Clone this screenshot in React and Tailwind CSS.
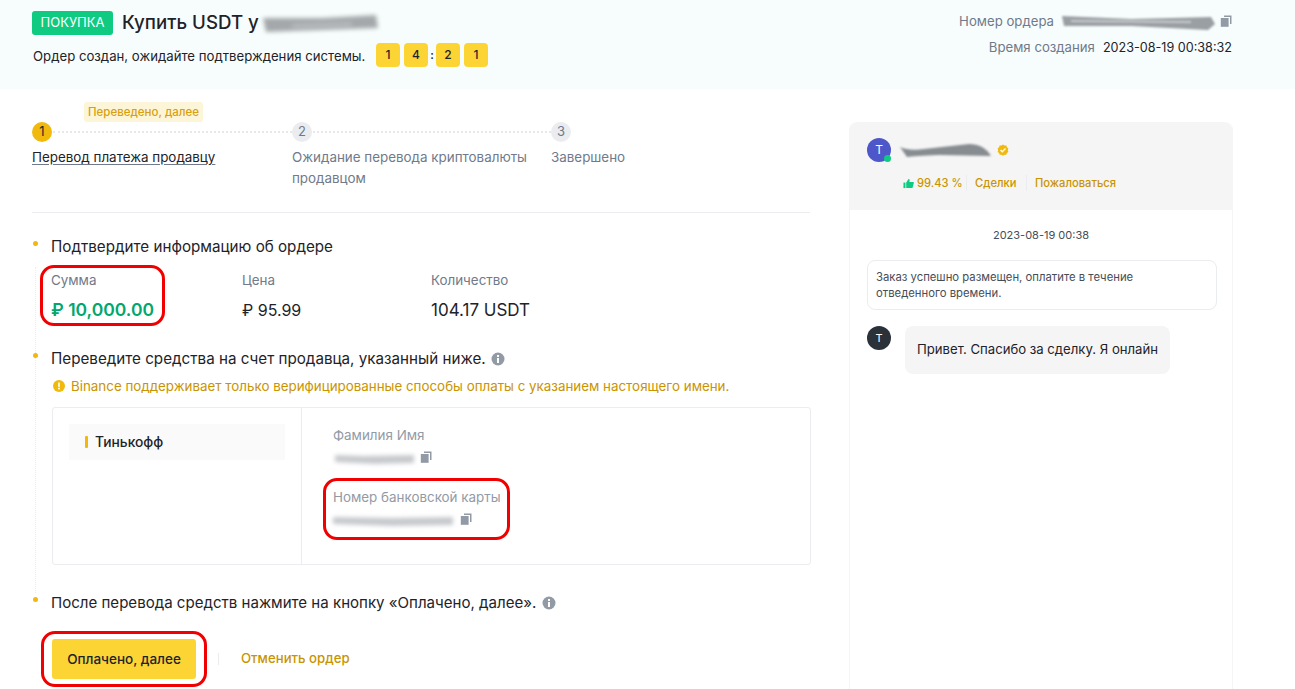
const F = { fontFamily: '"Inter", "Noto Sans", sans-serif' };

function Copy({ className = "" }) {
  return (
    <svg viewBox="0 0 12 12" className={className} fill="#929aa5">
      <path d="M4 0.500h7.500v8.500H10V2H4z" />
      <rect x="0.800" y="3" width="7.800" height="8.800" />
    </svg>
  );
}
function Info({ className = "" }) {
  return (
    <svg viewBox="0 0 14 14" className={className}>
      <circle cx="7" cy="7" r="6.500" fill="#929aa5" />
      <rect x="6" y="6" width="2" height="5" fill="#fff" />
      <rect x="6" y="3" width="2" height="2" fill="#fff" />
    </svg>
  );
}
function Smudge({ d, d2, w, h, color = "#8f9499", light = "#d5d7d9", blur = "blur-[1px]", className = "" }) {
  return (
    <svg viewBox={`0 0 ${w} ${h}`} width={w} height={h} className={`overflow-visible ${blur} ${className}`}>
      <path d={d} fill={color} />
      {d2 && <path d={d2} fill={light} />}
    </svg>
  );
}
function Section({ children, className = "" }) {
  return (
    <div className={`relative pl-[19px] ${className}`}>
      <span className="absolute left-[1px] top-[4px] h-[5px] w-[5px] rounded-full bg-[#f0b90b]" />
      {children}
    </div>
  );
}
function Digit({ children }) {
  return (
    <span className="flex h-6 w-6 items-center justify-center rounded-[4px] bg-[#fcd535] text-xs font-medium text-[#1e2329]">
      {children}
    </span>
  );
}
function Step({ n, active, label, width, line }) {
  return (
    <div className={width}>
      <div className="flex items-center">
        <span className={`flex h-5 w-5 shrink-0 items-center justify-center rounded-full text-[13px] ${active ? "bg-[#f0b90b] text-[#1e2329]" : "bg-[#eaecef] text-[#707a8a]"}`}>
          {n}
        </span>
        {line && <span className="ml-[1px] flex-1 border-t-2 border-dotted border-[#e6e8ea]" />}
      </div>
      <div className={`mt-[5px] w-[240px] text-[13.4px] leading-[21px] ${active ? "text-[#1e2329] underline underline-offset-2 decoration-[#707a8a]" : "text-[#707a8a]"}`}>
        {label}
      </div>
    </div>
  );
}
function Ring({ className }) {
  return <span className={`pointer-events-none absolute rounded-[14px] border-[3px] border-[#f00000] ${className}`} />;
}

export default function App() {
  return (
    <div style={F} className="relative h-[689px] w-[1295px] overflow-hidden bg-white text-[#1e2329]">
      <header className="flex h-[89px] justify-between bg-[#f7fdfc] pl-8 pr-[63px] pt-[11px]">
        <div>
          <div className="flex items-center">
            <span className="flex h-6 w-[81px] items-center justify-center rounded-[3px] bg-[#0ecb81] text-[13px] text-white">ПОКУПКА</span>
            <span className="ml-[9px] text-[18.7px] font-medium leading-6">Купить USDT у</span>
            <Smudge w={116} h={17} blur="blur-[2px]" color="#a4a8ab" light="#c9ccce" className="ml-[3px]" d="M1 3 L60 3 L114 0 L116 13 L60 15 L4 17 Z" d2="M30 10 L90 8 L90 10 L30 12 Z" />
          </div>
          <div className="mt-[7px] flex items-center text-[13.2px] leading-6">
            <span className="w-[344px] pl-[1px] pt-[2px]">Ордер создан, ожидайте подтверждения системы.</span>
            <Digit>1</Digit>
            <span className="w-1" />
            <Digit>4</Digit>
            <span className="w-2 text-center text-xs font-medium">:</span>
            <Digit>2</Digit>
            <span className="w-1" />
            <Digit>1</Digit>
          </div>
        </div>
        <div className="flex flex-col items-end text-[13.2px]">
          <div className="mt-[1px] flex h-5 items-center">
            <span className="text-[#707a8a]">Номер ордера</span>
            <Smudge w={154} h={15} color="#9a9fa3" light="#c9cccf" className="ml-[7px]" d="M1 1 L70 4 L150 2 L154 9 L147 15 L70 11 L3 11 Z" d2="M10 5 L130 6 L130 8 L10 7 Z" />
            <Copy className="ml-[5px] -mt-[3px] h-3 w-3" />
          </div>
          <div className="mt-[6px] flex h-5 items-center">
            <span className="text-[#707a8a]">Время создания</span>
            <span className="ml-2 text-[12.6px] text-[#1e2329]">2023-08-19 00:38:32</span>
          </div>
        </div>
      </header>

      <main className="flex pl-8">
        <div className="w-[778px]">
          <div className="relative h-[124px] border-b border-[#eaecef] pt-[33px]">
            <span className="absolute left-[52px] top-[13px] flex h-5 w-[119px] items-center justify-center rounded-[3px] bg-[#fdf5d8] pt-[2px] text-[11.5px] font-medium text-[#d89f0e]">
              Переведено, далее
            </span>
            <div className="flex">
              <Step n="1" active label="Перевод платежа продавцу" width="w-[260px]" line />
              <Step n="2" label="Ожидание перевода криптовалюты продавцом" width="w-[259px]" line />
              <Step n="3" label="Завершено" width="w-[100px]" />
            </div>
          </div>

          <div className="relative">
            <span className="absolute bottom-[20px] left-[3px] top-[30px] border-l border-dotted border-[#eaecef]" />
            <Section className="mt-[24px]">
              <div className="text-[15.2px] leading-5">Подтвердите информацию об ордере</div>
              <div className="mt-[13px] flex">
                <div className="relative w-[191px]">
                  <div className="text-[13.4px] leading-5 text-[#707a8a]">Сумма</div>
                  <div className="mt-[10px] text-[17.5px] font-semibold leading-5 text-[#03a66d]">₽ 10,000.00</div>
                  <Ring className="-left-[11px] -top-[5px] h-[61px] w-[125px]" />
                </div>
                <div className="w-[189px]">
                  <div className="text-[13.4px] leading-5 text-[#707a8a]">Цена</div>
                  <div className="mt-[10px] text-[16px] leading-5">₽ 95.99</div>
                </div>
                <div>
                  <div className="text-[13.4px] leading-5 text-[#707a8a]">Количество</div>
                  <div className="mt-[10px] text-[17px] leading-5">104.17 USDT</div>
                </div>
              </div>
            </Section>

            <Section className="mt-[29px]">
              <div className="flex items-center text-[15.2px] leading-5">
                Переведите средства на счет продавца, указанный ниже.
                <Info className="ml-[5px] h-[14px] w-[14px]" />
              </div>
              <div className="mt-[7px] flex items-center text-[13.37px] leading-5 text-[#c99400]">
                <svg viewBox="0 0 14 14" className="ml-[2px] mr-[6px] h-3 w-3">
                  <circle cx="7" cy="7" r="7" fill="#f0b90b" />
                  <rect x="6" y="3" width="2" height="5" fill="#fff" />
                  <rect x="6" y="9" width="2" height="2" fill="#fff" />
                </svg>
                Binance поддерживает только верифицированные способы оплаты с указанием настоящего имени.
              </div>
              <div className="ml-[1px] mt-[11px] flex h-[158px] w-[759px] rounded-[3px] border border-[#eaecef]">
                <div className="w-[249px] border-r border-[#eaecef] p-4">
                  <div className="flex h-9 w-[216px] items-center bg-[#fafafa] pl-4 text-[13.8px] font-medium">
                    <span className="mr-[7px] h-3 w-[3px] rounded-[1px] bg-[#f0b90b]" />
                    Тинькофф
                  </div>
                </div>
                <div className="pl-8 pt-[17px]">
                  <div className="-ml-[1px] text-[13.4px] leading-5 text-[#929aa5]">Фамилия Имя</div>
                  <div className="mt-[4px] flex h-5 items-center">
                    <Smudge w={81} h={12} color="#c6c9cc" blur="blur-[2px]" d="M1 2 L30 3 L80 2 V10 L40 11 L1 9 Z" />
                    <Copy className="ml-[5px] -mt-[4px] h-3 w-3" />
                  </div>
                  <div className="relative mt-[18px]">
                    <div className="-ml-[1px] text-[13.4px] leading-5 text-[#929aa5]">Номер банковской карты</div>
                    <div className="mt-[4px] flex h-5 items-center">
                      <Smudge w={122} h={12} color="#c6c9cc" blur="blur-[2px]" className="-ml-[2px]" d="M1 2 L60 3 L121 2 V10 L60 11 L1 9 Z" />
                      <Copy className="ml-[6px] -mt-[4px] h-3 w-3" />
                    </div>
                    <Ring className="-left-[11px] -top-[9px] h-[62px] w-[187px]" />
                  </div>
                </div>
              </div>
            </Section>

            <Section className="mt-[28px]">
              <div className="flex items-center text-[15.07px] leading-5">
                После перевода средств нажмите на кнопку «Оплачено, далее».
                <Info className="ml-[6px] h-[14px] w-[14px]" />
              </div>
            </Section>
          </div>
          <div className="ml-5 mt-[26px] flex items-center">
            <div className="relative">
              <button className="h-10 w-[144px] rounded-[3px] bg-[#fcd535] text-[13.5px] font-medium text-[#1e2329]">Оплачено, далее</button>
              <Ring className="-left-[11px] -top-[8px] h-[56px] w-[166px]" />
            </div>
            <span className="ml-[22px] h-3 border-l border-[#eaecef]" />
            <span className="ml-[22px] text-[13.2px] font-medium text-[#c99400]">Отменить ордер</span>
          </div>
        </div>

        <aside className="ml-[39px] mt-[33px] h-[600px] w-[384px] rounded-t-[8px] border border-t-0 border-[#f5f5f5]">
          <div className="h-[88px] rounded-t-[8px] bg-[#f5f5f5] pl-[17px] pt-4">
            <div className="flex items-center">
              <span className="relative flex h-6 w-6 items-center justify-center rounded-full bg-[#4e57c9] text-[12px] text-white">
                T
                <span className="absolute bottom-0 right-0 h-[7px] w-[7px] rounded-full bg-[#0ecb81]" />
              </span>
              <Smudge w={93} h={15} color="#878c91" className="ml-2" d="M1 4 Q10 8 25 6 L70 1 Q85 1 92 13 L40 12 Q15 13 8 14 Z" />
              <svg viewBox="0 0 24 24" className="ml-[5px] h-3 w-3">
                <path d="M12 1l3 2.200 3.700-.1 1.100 3.500 3 2.200-1.200 3.500 1.200 3.500-3 2.200-1.100 3.500-3.700-.1-3 2.200-3-2.200-3.700.1-1.100-3.500-3-2.200 1.200-3.500-1.200-3.500 3-2.200 1.100-3.500 3.700.1z" fill="#f0b90b" />
                <path d="M7 12l3.500 3.500L17 9" fill="none" stroke="#fff" strokeWidth="2.500" />
              </svg>
            </div>
            <div className="ml-[36px] mt-[13px] flex items-center text-[11.2px] font-medium text-[#c99400]">
              <svg viewBox="0 0 12 12" className="mr-[3px] h-[11px] w-[11px]" fill="#0ecb81">
                <rect x="0.500" y="5" width="2.200" height="6" />
                <path d="M3.500 5L6 1c1.200 0 1.500.8 1.200 1.800L6.900 4.300H11c.6 0 1 .5.800 1.100L10.500 10.300c-.1.400-.5.700-1 .7H3.500z" />
              </svg>
              <span className="w-[41px] whitespace-nowrap">99.43 %</span>
              <span className="mx-2 h-4 border-l border-[#eaecef]" />
              <span className="w-[43px]">Сделки</span>
              <span className="mx-2 h-4 border-l border-[#eaecef]" />
              <span>Пожаловаться</span>
            </div>
          </div>
          <div className="px-[17px]">
            <div className="mt-[15px] text-center text-[11px] leading-5 text-[#474d57]">2023-08-19 00:38</div>
            <div className="mt-[15px] h-[50px] w-[350px] rounded-[8px] border border-[#eaecef] px-2 pt-2 text-[11.3px] leading-4 text-[#474d57]">
              Заказ успешно размещен, оплатите в течение
              <br />
              отведенного времени.
            </div>
            <div className="mt-4 flex items-start">
              <span className="flex h-6 w-6 items-center justify-center rounded-full bg-[#2b3139] text-[11px] text-white">T</span>
              <div className="ml-[14px] flex h-12 items-center rounded-[8px] bg-[#f5f5f5] px-3 text-[13.15px]">Привет. Спасибо за сделку. Я онлайн</div>
            </div>
          </div>
        </aside>
      </main>
    </div>
  );
}
